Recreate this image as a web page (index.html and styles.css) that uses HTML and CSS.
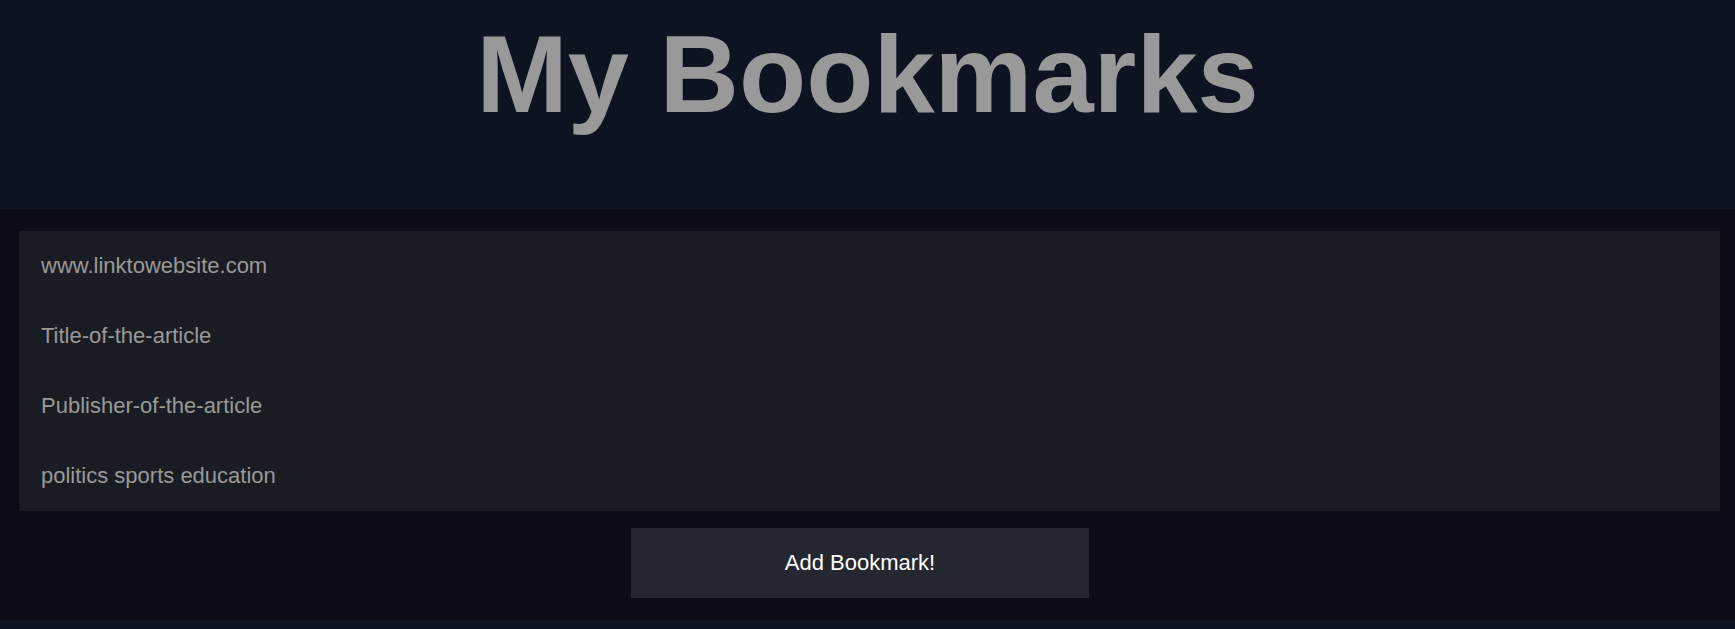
FILE: index.html
```html
<!DOCTYPE html>
<html lang="en">
<head>
<meta charset="utf-8">
<title>My Bookmarks</title>
<link rel="stylesheet" href="styles.css">
</head>
<body>
<header class="header">
  <h1 class="title">My Bookmarks</h1>
</header>
<main class="main">
  <form class="form">
    <div class="fields">
      <input class="field" type="text" placeholder="www.linktowebsite.com">
      <input class="field" type="text" placeholder="Title-of-the-article">
      <input class="field" type="text" placeholder="Publisher-of-the-article">
      <input class="field" type="text" placeholder="politics sports education">
    </div>
    <button class="add-btn" type="button">Add Bookmark!</button>
  </form>
</main>
</body>
</html>
```
FILE: styles.css
```css
* { box-sizing: border-box; }
html, body { margin: 0; padding: 0; }
body {
  background: #0e1321;
  font-family: "Liberation Sans", Arial, sans-serif;
  height: 629px;
  overflow: hidden;
}
.header {
  height: 209px;
  background: #0e1321;
  padding-top: 19px;
}
.title {
  margin: 0;
  text-align: center;
  font-size: 110px;
  line-height: 1;
  font-weight: 700;
  color: #999999;
}
.main {
  background: #0a0d15;
  height: 411px;
  padding: 22px 15px 22px 19px;
}
.form {
  display: flex;
  flex-direction: column;
  align-items: center;
  gap: 17px;
}
.fields {
  width: 100%;
  display: flex;
  flex-direction: column;
  background: #1a1c24;
}
.field {
  height: 70px;
  border: none;
  outline: none;
  background: transparent;
  padding: 0 22px;
  font-family: "Liberation Sans", Arial, sans-serif;
  font-size: 22px;
  color: #999999;
}
.field::placeholder { color: #999999; opacity: 1; }
.add-btn {
  width: 458px;
  height: 70px;
  border: none;
  background: #24272f;
  color: #ffffff;
  font-family: "Liberation Sans", Arial, sans-serif;
  font-size: 22px;
  margin-right: 19px;
}
```
